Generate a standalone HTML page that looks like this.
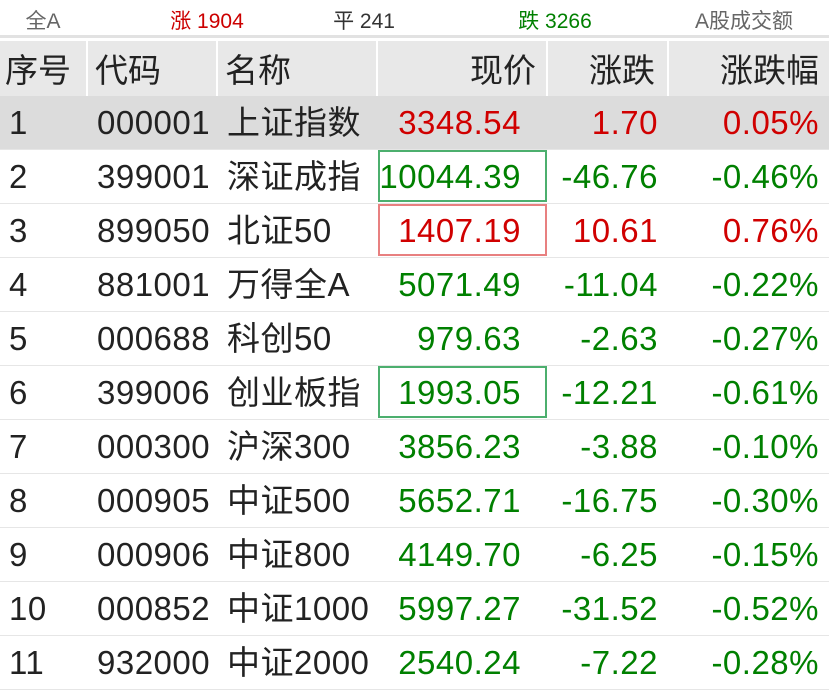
<!DOCTYPE html>
<html><head><meta charset="utf-8"><style>
*{margin:0;padding:0;box-sizing:border-box}
body{width:829px;height:688px;overflow:hidden;background:#fff;font-family:"Liberation Sans","Noto Sans CJK SC",sans-serif;position:relative}
.top{position:absolute;top:0;left:0;width:829px;height:38px;font-size:21px;border-bottom:3px solid #e2e2e2}
.top span{position:absolute;top:5px;transform:translateX(-50%);white-space:nowrap}
.hdr{position:absolute;top:41px;left:0;width:829px;height:55px;background:#e8e8e8;font-size:33px;color:#222}
.c{position:absolute;height:100%;line-height:54px;white-space:nowrap}
.hdr .c{border-right:2px solid #fff;line-height:60px}
.row{position:absolute;left:0;width:829px;height:54px;font-size:33px;letter-spacing:0.5px;border-bottom:1px solid #e6e6e6}
.g{color:#008000}.r{color:#d00000}.k{color:#222}
.box{position:absolute;left:378px;width:169px;height:52px;top:0;border:2px solid}
</style></head><body>
<div class="top">
<span style="left:43px;color:#666">全A</span>
<span style="left:207px;color:#cc0000">涨 1904</span>
<span style="left:364px;color:#333">平 241</span>
<span style="left:555px;color:#008000">跌 3266</span>
<span style="left:744px;color:#666">A股成交额</span>
</div>
<div class="hdr">
<div class="c" style="left:0;width:88px;padding-left:5px">序号</div>
<div class="c" style="left:88px;width:130px;padding-left:7px">代码</div>
<div class="c" style="left:218px;width:160px;padding-left:7px">名称</div>
<div class="c" style="left:378px;width:170px;text-align:right;padding-right:10px">现价</div>
<div class="c" style="left:548px;width:121px;text-align:right;padding-right:12px">涨跌</div>
<div class="c" style="left:669px;width:160px;text-align:right;padding-right:10px;border:none">涨跌幅</div>
</div>
<div id="rows"></div>
<script>
var d=[
["1","000001","上证指数","3348.54","1.70","0.05%","r",""],
["2","399001","深证成指","10044.39","-46.76","-0.46%","g","g"],
["3","899050","北证50","1407.19","10.61","0.76%","r","r"],
["4","881001","万得全A","5071.49","-11.04","-0.22%","g",""],
["5","000688","科创50","979.63","-2.63","-0.27%","g",""],
["6","399006","创业板指","1993.05","-12.21","-0.61%","g","g"],
["7","000300","沪深300","3856.23","-3.88","-0.10%","g",""],
["8","000905","中证500","5652.71","-16.75","-0.30%","g",""],
["9","000906","中证800","4149.70","-6.25","-0.15%","g",""],
["10","000852","中证1000","5997.27","-31.52","-0.52%","g",""],
["11","932000","中证2000","2540.24","-7.22","-0.28%","g",""]];
var h="";
d.forEach(function(x,i){
var top=96+i*54;
var bg=i==0?"background:#dcdcdc;":"";
var bx=x[7]?'<div class="box" style="border-color:'+(x[7]=="g"?"#4caf6e":"#e88080")+'"></div>':"";
h+='<div class="row" style="top:'+top+'px;'+bg+'">'+bx+
'<div class="c k" style="left:0;padding-left:9px">'+x[0]+'</div>'+
'<div class="c k" style="left:97px">'+x[1]+'</div>'+
'<div class="c k" style="left:227px">'+x[2]+'</div>'+
'<div class="c '+x[6]+'" style="right:308px">'+x[3]+'</div>'+
'<div class="c '+x[6]+'" style="right:171px">'+x[4]+'</div>'+
'<div class="c '+x[6]+'" style="right:10px">'+x[5]+'</div></div>';
});
document.getElementById("rows").innerHTML=h;
</script>
</body></html>
